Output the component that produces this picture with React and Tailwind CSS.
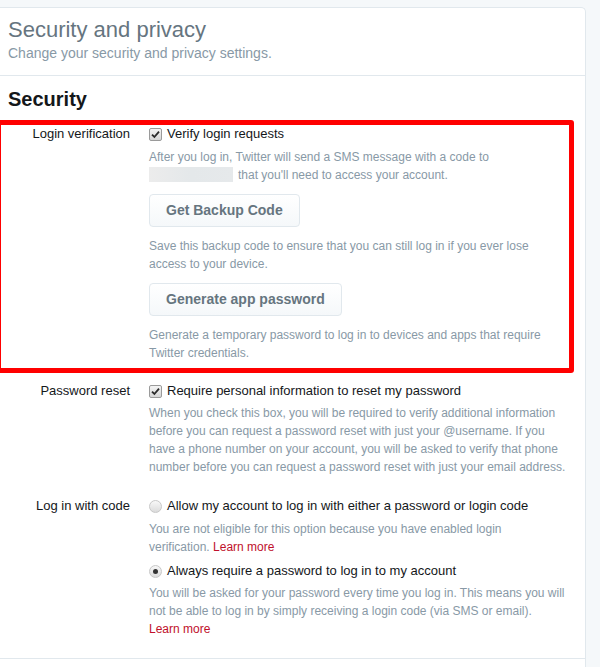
import React from 'react';

function CheckBox() {
  return (
    <span className="relative inline-flex h-[13px] w-[13px] shrink-0 items-center justify-center rounded-[2px] border border-[#9a9a9a] bg-linear-to-b from-[#f4f4f4] to-[#d6d6d6]">
      <svg width="9" height="9" viewBox="0 0 9 9">
        <path d="M1 4.6 L3.4 7 L8 1.6" fill="none" stroke="#2b2b2b" strokeWidth="1.8" />
      </svg>
    </span>
  );
}

function Radio({ checked }) {
  return (
    <span className="inline-flex h-[13px] w-[13px] shrink-0 items-center justify-center rounded-full border border-[#c8c8c8] bg-linear-to-b from-[#f8f8f8] to-[#dcdcdc]">
      {checked && <span className="h-[5px] w-[5px] rounded-full bg-[#333]" />}
    </span>
  );
}

function Desc({ className = '', children }) {
  return (
    <p className={'whitespace-nowrap text-[12px] leading-[18px] text-[#8899a6] ' + className}>
      {children}
    </p>
  );
}

function Option({ control, children, className = '' }) {
  return (
    <div className={'flex items-center gap-[5px] text-[13px] leading-[18px] text-[#14171a] ' + className}>
      {control}
      <span>{children}</span>
    </div>
  );
}

function Button({ children }) {
  return (
    <button className="mt-[10px] block h-[33px] rounded-[4px] border border-[#e1e8ed] bg-linear-to-b from-white to-[#f5f8fa] px-4 text-[14px] font-bold text-[#66757f]">
      {children}
    </button>
  );
}

function Row({ label, children, className = '' }) {
  return (
    <div className={'flex ' + className}>
      <div className="w-[130px] shrink-0 text-right text-[13px] leading-[18px] text-[#14171a]">{label}</div>
      <div className="ml-[19px] flex-1">{children}</div>
    </div>
  );
}

const LearnMore = () => <a className="text-[#c0102c]">Learn more</a>;

export default function App() {
  return (
    <div className="min-h-[667px] w-[600px] bg-[#f5f8fa] pt-[7px] font-['Liberation_Sans',Arial,sans-serif]">
      <div className="relative w-[586px] rounded-tr-[5px] border-t border-r border-[#e1e8ed] bg-white">
        <div className="border-b border-[#e1e8ed] px-2 pt-[8px] pb-[13px]">
          <h1 className="text-[22px] leading-[28px] text-[#66757f]">Security and privacy</h1>
          <p className="text-[14px] leading-[18px] text-[#8899a6]">Change your security and privacy settings.</p>
        </div>

        <h2 className="px-2 pt-[11px] text-[20px] font-bold leading-[24px] text-[#14171a]">Security</h2>

        <Row label="Login verification" className="mt-[14px]">
          <Option control={<CheckBox />}>Verify login requests</Option>
          <Desc className="mt-[5px]">
            After you log in, Twitter will send a SMS message with a code to
            <br />
            <span className="mr-[5px] inline-block h-[15px] w-[84px] translate-y-[1px] align-top bg-linear-to-r from-[#ececec] via-[#e4e8ea] to-[#e6e9eb]" />
            that you'll need to access your account.
          </Desc>
          <Button>Get Backup Code</Button>
          <Desc className="mt-[10px]">
            Save this backup code to ensure that you can still log in if you ever lose
            <br />
            access to your device.
          </Desc>
          <Button>Generate app password</Button>
          <Desc className="mt-[10px]">
            Generate a temporary password to log in to devices and apps that require
            <br />
            Twitter credentials.
          </Desc>
        </Row>

        <Row label="Password reset" className="mt-[20px]">
          <Option control={<CheckBox />}>Require personal information to reset my password</Option>
          <Desc className="mt-[4px]">
            When you check this box, you will be required to verify additional information
            <br />
            before you can request a password reset with just your @username. If you
            <br />
            have a phone number on your account, you will be asked to verify that phone
            <br />
            number before you can request a password reset with just your email address.
          </Desc>
        </Row>

        <Row label="Log in with code" className="mt-[21px] border-b border-[#e1e8ed] pb-[20px]">
          <Option control={<Radio />}>Allow my account to log in with either a password or login code</Option>
          <Desc className="mt-[5px]">
            You are not eligible for this option because you have enabled login
            <br />
            verification. <LearnMore />
          </Desc>
          <Option control={<Radio checked />} className="mt-[6px]">
            Always require a password to log in to my account
          </Option>
          <Desc className="mt-[4px]">
            You will be asked for your password every time you log in. This means you will
            <br />
            not be able to log in by simply receiving a login code (via SMS or email).
            <br />
            <LearnMore />
          </Desc>
        </Row>

        <div className="h-[20px]" />

        {/* red annotation frame drawn over the login verification block */}
        <div className="pointer-events-none absolute top-[112px] left-[-4px] h-[253px] w-[578px] rounded-[3px] border-[5px] border-[#ff0000]" />
      </div>
    </div>
  );
}
